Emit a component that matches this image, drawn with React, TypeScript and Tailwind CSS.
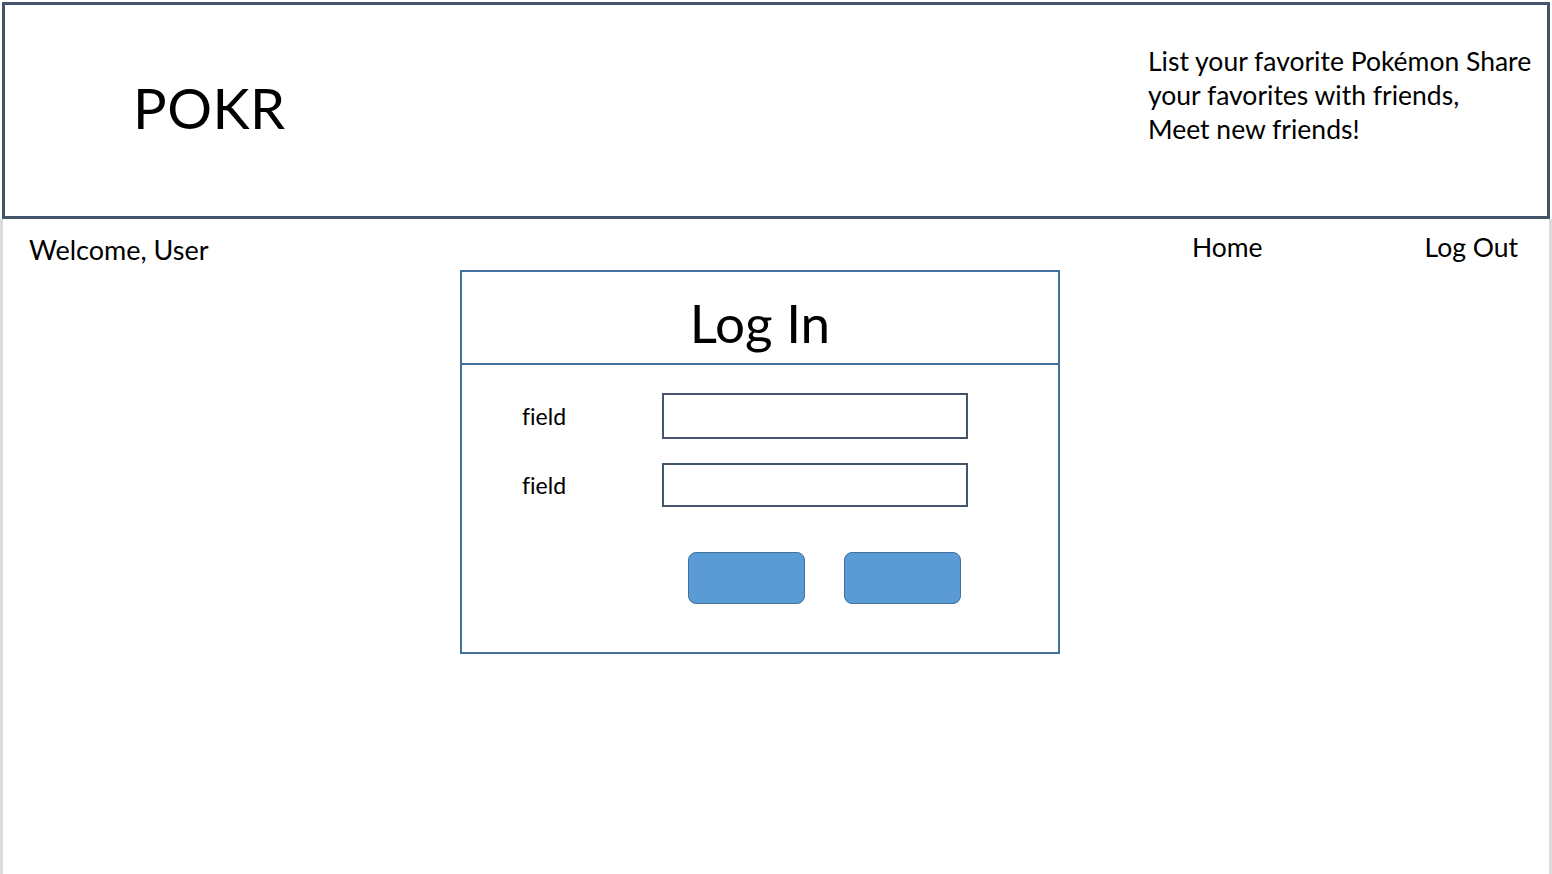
export default function App() {
  const font = { fontFamily: "Lato, 'Open Sans', sans-serif", fontVariantLigatures: "none" as const };
  return (
    <div className="h-[874px] w-full bg-white text-black flex flex-col" style={font}>
      <header className="mx-[2px] mt-[2px] h-[217px] border-[3px] border-[#44546a] flex items-start">
        <div className="ml-[128px] mt-[75px] text-[56px] leading-none tracking-[0.5px]">POKR</div>
        <p className="ml-auto w-[399px] mt-[39px] text-[26.5px] leading-[34px]">
          List your favorite Pokémon Share
          <br />
          your favorites with friends,
          <br />
          Meet new friends!
        </p>
      </header>

      <main className="flex-1 border-x-[3px] border-[#dcdcdc]">
        <nav className="h-[51px] flex items-start">
          <span className="ml-[26px] mt-[17px] text-[27px] leading-none">Welcome, User</span>
          <span className="ml-auto mt-[15px] text-[26.5px] leading-none">Home</span>
          <span className="ml-[162px] mr-[31px] mt-[15px] text-[26.5px] leading-none">Log Out</span>
        </nav>

        <section className="ml-[457px] w-[600px] h-[384px] border-2 border-[#41719c] flex flex-col">
          <div className="h-[93px] border-b-2 border-[#41719c] flex justify-center">
            <h1 className="mt-[24px] text-[53px] leading-none">Log In</h1>
          </div>

          <div className="flex flex-col pt-[28px]">
            <div className="flex items-center h-[46px]">
              <label className="ml-[60px] w-[140px] text-[23px]">field</label>
              <div className="w-[306px] h-[46px] border-2 border-[#44546a] bg-white" />
            </div>
            <div className="flex items-center h-[44px] mt-[24px]">
              <label className="ml-[60px] w-[140px] text-[23px]">field</label>
              <div className="w-[306px] h-[44px] border-2 border-[#44546a] bg-white" />
            </div>
            <div className="flex gap-[39px] ml-[226px] mt-[45px]">
              <button className="w-[117px] h-[52px] rounded-[8px] bg-[#5b9bd5] border-[1.5px] border-[#41719c]" />
              <button className="w-[117px] h-[52px] rounded-[8px] bg-[#5b9bd5] border-[1.5px] border-[#41719c]" />
            </div>
          </div>
        </section>
      </main>
    </div>
  );
}
